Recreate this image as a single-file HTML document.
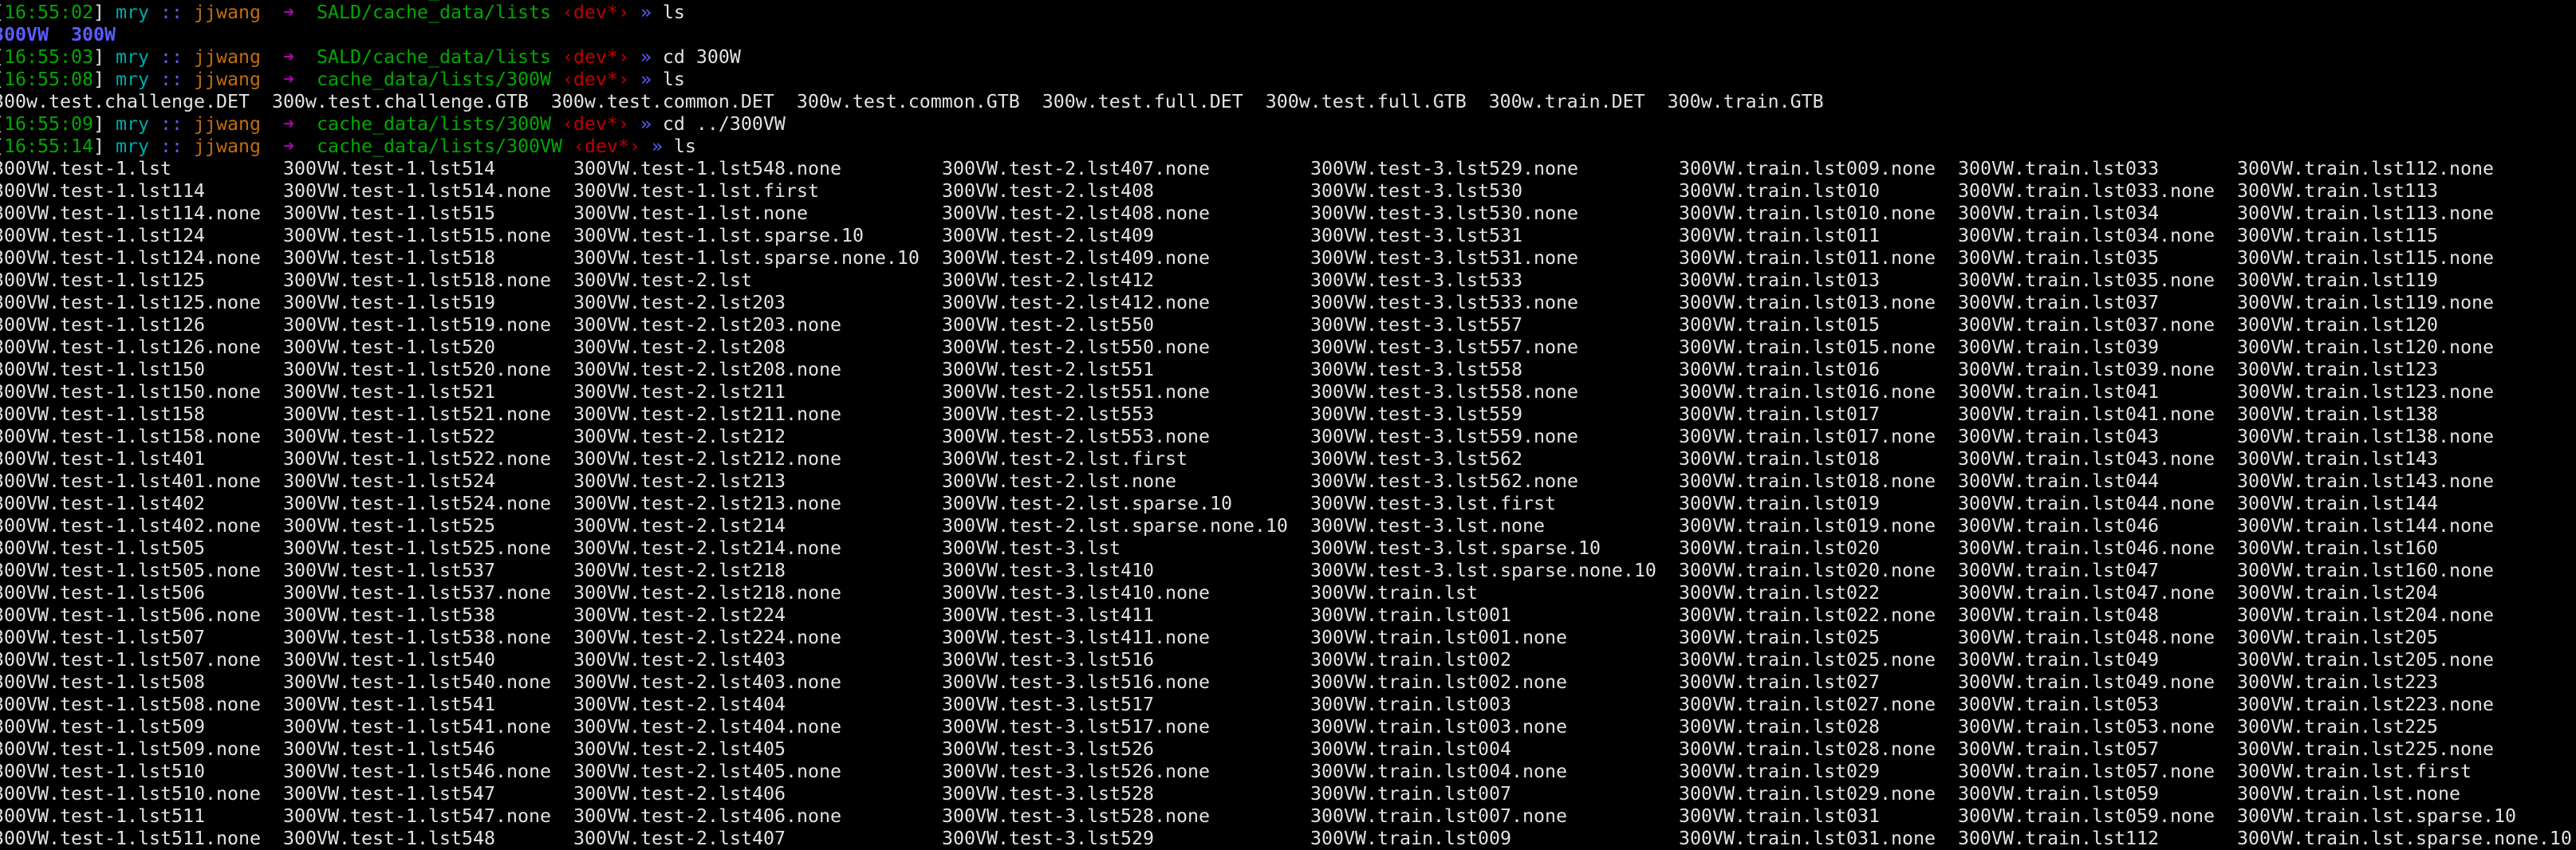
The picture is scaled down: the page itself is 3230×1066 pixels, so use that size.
<!DOCTYPE html>
<html><head><meta charset="utf-8"><style>
html,body{margin:0;padding:0;background:#000;width:3230px;height:1066px;overflow:hidden}
pre{position:absolute;margin:0;font-family:"DejaVu Sans Mono","Liberation Mono",monospace;font-size:23.26px;line-height:28px;color:#e2e2e2;white-space:pre}
.g{color:#00a800}.t{color:#00a8a8}.b{color:#5c5cff}.o{color:#c06c10}.m{color:#b000b0}.r{color:#c00000}.d{color:#5c5cff;font-weight:bold}
.a{display:inline-block;width:14px;overflow:visible}
</style></head><body>
<pre style="left:-9px;top:-26px">[<span class="g">16:55:01</span>] <span class="t">mry</span> <span class="b">::</span> <span class="o">jjwang</span>  <span class="m a">➜</span>  <span class="g">SALD/cache_data/lists</span> <span class="r">‹dev*›</span> <span class="b">»</span> 
[<span class="g">16:55:02</span>] <span class="t">mry</span> <span class="b">::</span> <span class="o">jjwang</span>  <span class="m a">➜</span>  <span class="g">SALD/cache_data/lists</span> <span class="r">‹dev*›</span> <span class="b">»</span> ls
<span class="d">300VW</span>  <span class="d">300W</span>
[<span class="g">16:55:03</span>] <span class="t">mry</span> <span class="b">::</span> <span class="o">jjwang</span>  <span class="m a">➜</span>  <span class="g">SALD/cache_data/lists</span> <span class="r">‹dev*›</span> <span class="b">»</span> cd 300W
[<span class="g">16:55:08</span>] <span class="t">mry</span> <span class="b">::</span> <span class="o">jjwang</span>  <span class="m a">➜</span>  <span class="g">cache_data/lists/300W</span> <span class="r">‹dev*›</span> <span class="b">»</span> ls
300w.test.challenge.DET  300w.test.challenge.GTB  300w.test.common.DET  300w.test.common.GTB  300w.test.full.DET  300w.test.full.GTB  300w.train.DET  300w.train.GTB
[<span class="g">16:55:09</span>] <span class="t">mry</span> <span class="b">::</span> <span class="o">jjwang</span>  <span class="m a">➜</span>  <span class="g">cache_data/lists/300W</span> <span class="r">‹dev*›</span> <span class="b">»</span> cd ../300VW
[<span class="g">16:55:14</span>] <span class="t">mry</span> <span class="b">::</span> <span class="o">jjwang</span>  <span class="m a">➜</span>  <span class="g">cache_data/lists/300VW</span> <span class="r">‹dev*›</span> <span class="b">»</span> ls</pre>
<pre style="left:-9px;top:198px">300VW.test-1.lst
300VW.test-1.lst114
300VW.test-1.lst114.none
300VW.test-1.lst124
300VW.test-1.lst124.none
300VW.test-1.lst125
300VW.test-1.lst125.none
300VW.test-1.lst126
300VW.test-1.lst126.none
300VW.test-1.lst150
300VW.test-1.lst150.none
300VW.test-1.lst158
300VW.test-1.lst158.none
300VW.test-1.lst401
300VW.test-1.lst401.none
300VW.test-1.lst402
300VW.test-1.lst402.none
300VW.test-1.lst505
300VW.test-1.lst505.none
300VW.test-1.lst506
300VW.test-1.lst506.none
300VW.test-1.lst507
300VW.test-1.lst507.none
300VW.test-1.lst508
300VW.test-1.lst508.none
300VW.test-1.lst509
300VW.test-1.lst509.none
300VW.test-1.lst510
300VW.test-1.lst510.none
300VW.test-1.lst511
300VW.test-1.lst511.none</pre>
<pre style="left:355px;top:198px">300VW.test-1.lst514
300VW.test-1.lst514.none
300VW.test-1.lst515
300VW.test-1.lst515.none
300VW.test-1.lst518
300VW.test-1.lst518.none
300VW.test-1.lst519
300VW.test-1.lst519.none
300VW.test-1.lst520
300VW.test-1.lst520.none
300VW.test-1.lst521
300VW.test-1.lst521.none
300VW.test-1.lst522
300VW.test-1.lst522.none
300VW.test-1.lst524
300VW.test-1.lst524.none
300VW.test-1.lst525
300VW.test-1.lst525.none
300VW.test-1.lst537
300VW.test-1.lst537.none
300VW.test-1.lst538
300VW.test-1.lst538.none
300VW.test-1.lst540
300VW.test-1.lst540.none
300VW.test-1.lst541
300VW.test-1.lst541.none
300VW.test-1.lst546
300VW.test-1.lst546.none
300VW.test-1.lst547
300VW.test-1.lst547.none
300VW.test-1.lst548</pre>
<pre style="left:719px;top:198px">300VW.test-1.lst548.none
300VW.test-1.lst.first
300VW.test-1.lst.none
300VW.test-1.lst.sparse.10
300VW.test-1.lst.sparse.none.10
300VW.test-2.lst
300VW.test-2.lst203
300VW.test-2.lst203.none
300VW.test-2.lst208
300VW.test-2.lst208.none
300VW.test-2.lst211
300VW.test-2.lst211.none
300VW.test-2.lst212
300VW.test-2.lst212.none
300VW.test-2.lst213
300VW.test-2.lst213.none
300VW.test-2.lst214
300VW.test-2.lst214.none
300VW.test-2.lst218
300VW.test-2.lst218.none
300VW.test-2.lst224
300VW.test-2.lst224.none
300VW.test-2.lst403
300VW.test-2.lst403.none
300VW.test-2.lst404
300VW.test-2.lst404.none
300VW.test-2.lst405
300VW.test-2.lst405.none
300VW.test-2.lst406
300VW.test-2.lst406.none
300VW.test-2.lst407</pre>
<pre style="left:1181px;top:198px">300VW.test-2.lst407.none
300VW.test-2.lst408
300VW.test-2.lst408.none
300VW.test-2.lst409
300VW.test-2.lst409.none
300VW.test-2.lst412
300VW.test-2.lst412.none
300VW.test-2.lst550
300VW.test-2.lst550.none
300VW.test-2.lst551
300VW.test-2.lst551.none
300VW.test-2.lst553
300VW.test-2.lst553.none
300VW.test-2.lst.first
300VW.test-2.lst.none
300VW.test-2.lst.sparse.10
300VW.test-2.lst.sparse.none.10
300VW.test-3.lst
300VW.test-3.lst410
300VW.test-3.lst410.none
300VW.test-3.lst411
300VW.test-3.lst411.none
300VW.test-3.lst516
300VW.test-3.lst516.none
300VW.test-3.lst517
300VW.test-3.lst517.none
300VW.test-3.lst526
300VW.test-3.lst526.none
300VW.test-3.lst528
300VW.test-3.lst528.none
300VW.test-3.lst529</pre>
<pre style="left:1643px;top:198px">300VW.test-3.lst529.none
300VW.test-3.lst530
300VW.test-3.lst530.none
300VW.test-3.lst531
300VW.test-3.lst531.none
300VW.test-3.lst533
300VW.test-3.lst533.none
300VW.test-3.lst557
300VW.test-3.lst557.none
300VW.test-3.lst558
300VW.test-3.lst558.none
300VW.test-3.lst559
300VW.test-3.lst559.none
300VW.test-3.lst562
300VW.test-3.lst562.none
300VW.test-3.lst.first
300VW.test-3.lst.none
300VW.test-3.lst.sparse.10
300VW.test-3.lst.sparse.none.10
300VW.train.lst
300VW.train.lst001
300VW.train.lst001.none
300VW.train.lst002
300VW.train.lst002.none
300VW.train.lst003
300VW.train.lst003.none
300VW.train.lst004
300VW.train.lst004.none
300VW.train.lst007
300VW.train.lst007.none
300VW.train.lst009</pre>
<pre style="left:2105px;top:198px">300VW.train.lst009.none
300VW.train.lst010
300VW.train.lst010.none
300VW.train.lst011
300VW.train.lst011.none
300VW.train.lst013
300VW.train.lst013.none
300VW.train.lst015
300VW.train.lst015.none
300VW.train.lst016
300VW.train.lst016.none
300VW.train.lst017
300VW.train.lst017.none
300VW.train.lst018
300VW.train.lst018.none
300VW.train.lst019
300VW.train.lst019.none
300VW.train.lst020
300VW.train.lst020.none
300VW.train.lst022
300VW.train.lst022.none
300VW.train.lst025
300VW.train.lst025.none
300VW.train.lst027
300VW.train.lst027.none
300VW.train.lst028
300VW.train.lst028.none
300VW.train.lst029
300VW.train.lst029.none
300VW.train.lst031
300VW.train.lst031.none</pre>
<pre style="left:2455px;top:198px">300VW.train.lst033
300VW.train.lst033.none
300VW.train.lst034
300VW.train.lst034.none
300VW.train.lst035
300VW.train.lst035.none
300VW.train.lst037
300VW.train.lst037.none
300VW.train.lst039
300VW.train.lst039.none
300VW.train.lst041
300VW.train.lst041.none
300VW.train.lst043
300VW.train.lst043.none
300VW.train.lst044
300VW.train.lst044.none
300VW.train.lst046
300VW.train.lst046.none
300VW.train.lst047
300VW.train.lst047.none
300VW.train.lst048
300VW.train.lst048.none
300VW.train.lst049
300VW.train.lst049.none
300VW.train.lst053
300VW.train.lst053.none
300VW.train.lst057
300VW.train.lst057.none
300VW.train.lst059
300VW.train.lst059.none
300VW.train.lst112</pre>
<pre style="left:2805px;top:198px">300VW.train.lst112.none
300VW.train.lst113
300VW.train.lst113.none
300VW.train.lst115
300VW.train.lst115.none
300VW.train.lst119
300VW.train.lst119.none
300VW.train.lst120
300VW.train.lst120.none
300VW.train.lst123
300VW.train.lst123.none
300VW.train.lst138
300VW.train.lst138.none
300VW.train.lst143
300VW.train.lst143.none
300VW.train.lst144
300VW.train.lst144.none
300VW.train.lst160
300VW.train.lst160.none
300VW.train.lst204
300VW.train.lst204.none
300VW.train.lst205
300VW.train.lst205.none
300VW.train.lst223
300VW.train.lst223.none
300VW.train.lst225
300VW.train.lst225.none
300VW.train.lst.first
300VW.train.lst.none
300VW.train.lst.sparse.10
300VW.train.lst.sparse.none.10</pre>
</body></html>
